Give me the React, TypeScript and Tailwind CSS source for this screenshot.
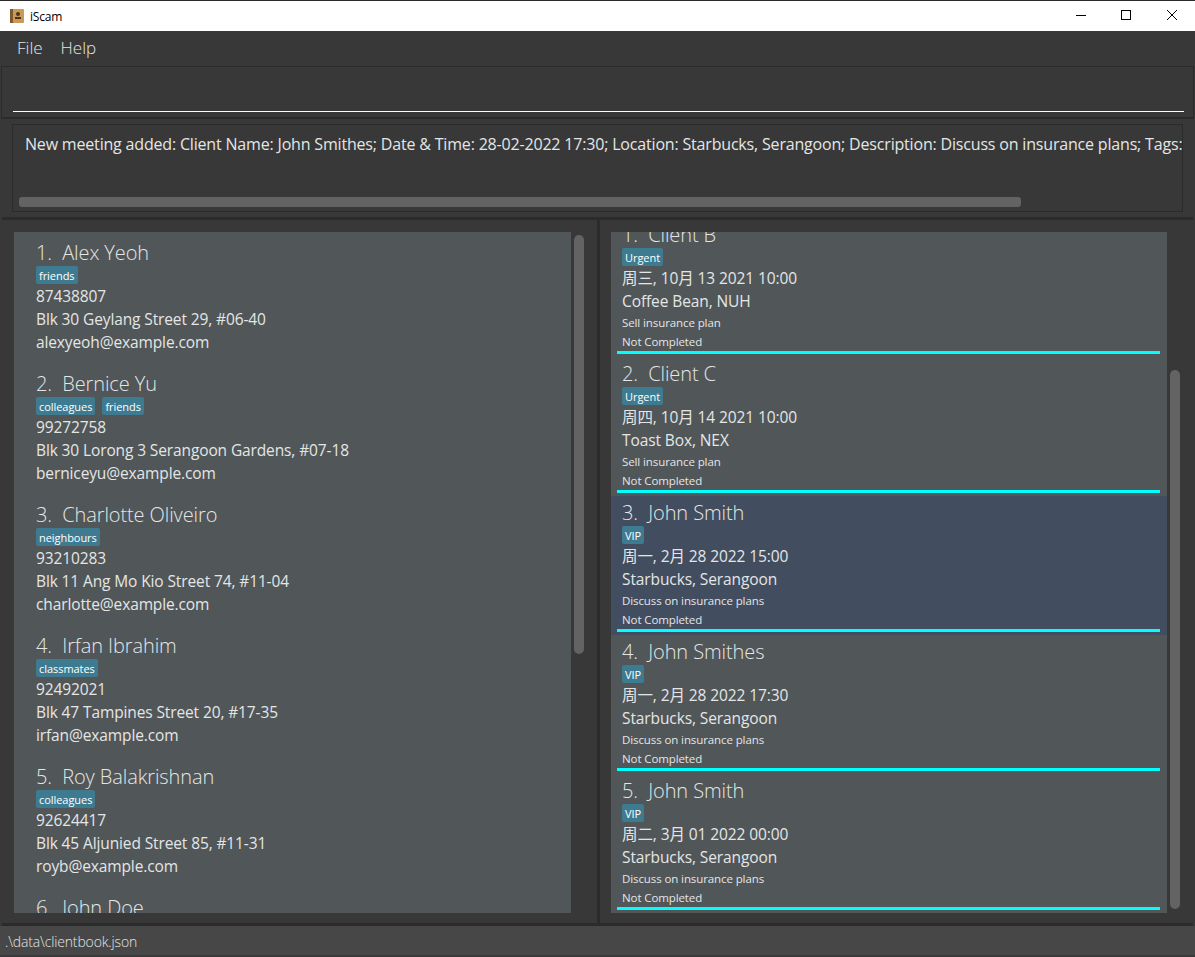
const clients = [
  { name: "Alex Yeoh", tags: ["friends"], phone: "87438807", address: "Blk 30 Geylang Street 29, #06-40", email: "alexyeoh@example.com" },
  { name: "Bernice Yu", tags: ["colleagues", "friends"], phone: "99272758", address: "Blk 30 Lorong 3 Serangoon Gardens, #07-18", email: "berniceyu@example.com" },
  { name: "Charlotte Oliveiro", tags: ["neighbours"], phone: "93210283", address: "Blk 11 Ang Mo Kio Street 74, #11-04", email: "charlotte@example.com" },
  { name: "Irfan Ibrahim", tags: ["classmates"], phone: "92492021", address: "Blk 47 Tampines Street 20, #17-35", email: "irfan@example.com" },
  { name: "Roy Balakrishnan", tags: ["colleagues"], phone: "92624417", address: "Blk 45 Aljunied Street 85, #11-31", email: "royb@example.com" },
  { name: "John Doe", tags: ["friends"], phone: "91234567", address: "Blk 1 Example Road", email: "john@example.com" },
];

const meetings = [
  { name: "Client B", tag: "Urgent", date: "周三, 10月 13 2021 10:00", place: "Coffee Bean, NUH", desc: "Sell insurance plan" },
  { name: "Client C", tag: "Urgent", date: "周四, 10月 14 2021 10:00", place: "Toast Box, NEX", desc: "Sell insurance plan" },
  { name: "John Smith", tag: "VIP", date: "周一, 2月 28 2022 15:00", place: "Starbucks, Serangoon", desc: "Discuss on insurance plans", selected: true },
  { name: "John Smithes", tag: "VIP", date: "周一, 2月 28 2022 17:30", place: "Starbucks, Serangoon", desc: "Discuss on insurance plans" },
  { name: "John Smith", tag: "VIP", date: "周二, 3月 01 2022 00:00", place: "Starbucks, Serangoon", desc: "Discuss on insurance plans" },
];

const Tag = ({ label }: { label: string }) => (
  <span className="h-[18px] px-[3px] flex items-center rounded-[2px] bg-[#3e7b91] text-white text-[11px] tracking-[-0.05px] leading-none">
    {label}
  </span>
);

const ClientCard = ({ index, client }: { index: number; client: (typeof clients)[number] }) => (
  <div className="h-[131px] pl-[22px] pt-[7px] shrink-0 text-[#e4e6e6]">
    <div className="h-[28px] flex items-center text-[20px] font-light tracking-[-0.1px] whitespace-pre">{index}.  {client.name}</div>
    <div className="h-[18px] flex gap-[7px] mt-[-1px]">
      {client.tags.map((tag) => (
        <Tag key={tag} label={tag} />
      ))}
    </div>
    <div className="h-[23px] mt-[1px] flex items-center text-[15.5px] tracking-[-0.12px]">{client.phone}</div>
    <div className="h-[23px] flex items-center text-[15.5px] tracking-[-0.12px]">{client.address}</div>
    <div className="h-[23px] flex items-center text-[15.5px] tracking-[-0.12px]">{client.email}</div>
  </div>
);

const MeetingCard = ({ index, meeting }: { index: number; meeting: (typeof meetings)[number] }) => (
  <div className={`h-[139px] shrink-0 pt-[3px] pl-[6px] pr-[7px] text-[#e4e6e6] ${meeting.selected ? "bg-[#424d5f]" : ""}`}>
    <div className="pl-[5px] h-[28px] flex items-center text-[20px] font-light tracking-[-0.1px] whitespace-pre">{index}.  {meeting.name}</div>
    <div className="pl-[5px] h-[18px] mt-[-1px] flex">
      <Tag label={meeting.tag} />
    </div>
    <div className="pl-[5px] h-[23px] mt-[1px] flex items-center text-[15.5px] tracking-[-0.1px]">{meeting.date}</div>
    <div className="pl-[5px] h-[23px] flex items-center text-[15.5px] tracking-[-0.1px]">{meeting.place}</div>
    <div className="pl-[5px] h-[19px] flex items-center text-[11.5px] tracking-[-0.1px]">{meeting.desc}</div>
    <div className="pl-[5px] h-[19px] flex items-center text-[11.5px] tracking-[-0.1px]">Not Completed</div>
    <div className="h-[3px] bg-[#00ffff]" />
  </div>
);

export default function App() {
  return (
    <div className="w-[1195px] h-[957px] flex flex-col overflow-hidden bg-[#383838] font-['Open_Sans','Noto_Sans_CJK_SC',sans-serif]">
      {/* Title bar */}
      <div className="h-[31px] shrink-0 border-t border-[#2a2a2a] bg-white flex items-center pl-[10px] text-black">
        <svg width="14" height="14" viewBox="0 0 14 14">
          <rect x="0" y="0" width="14" height="14" rx="1" fill="#c99a55" />
          <rect x="0" y="0" width="3" height="14" fill="#7d5a30" />
          <circle cx="8" cy="5" r="2" fill="#4a3320" />
          <rect x="5" y="8" width="6" height="2" fill="#4a3320" />
        </svg>
        <span className="ml-[6px] mt-[1px] text-[12px] tracking-[-0.2px]">iScam</span>
        <div className="ml-auto flex items-center">
          <svg width="46" height="30" viewBox="0 0 46 30">
            <path d="M19 14.5H29" stroke="#000" />
          </svg>
          <svg width="46" height="30" viewBox="0 0 46 30">
            <rect x="18.5" y="9.5" width="9" height="9" fill="none" stroke="#000" />
          </svg>
          <svg width="46" height="30" viewBox="0 0 46 30">
            <path d="M18 9L28 19M28 9L18 19" stroke="#000" />
          </svg>
        </div>
      </div>

      {/* Menu */}
      <div className="h-[35px] shrink-0 flex items-center pl-[17px] pb-[1px] gap-[18px] text-[17px] font-light text-[#e4e6e6]">
        <span>File</span>
        <span>Help</span>
      </div>

      {/* Command box */}
      <div className="h-[53px] shrink-0 mx-[1px] border border-[#2b2b2b] border-b-2 pl-[11px] pr-[9px] flex items-end pb-[5px]">
        <div className="w-full h-px bg-white" />
      </div>

      {/* Result display */}
      <div className="h-[98px] shrink-0 mx-[2px] px-[10px] pt-[5px]">
        <div className="h-[88px] border border-[#2b2b2b] px-[6px] relative overflow-hidden">
          <p className="pl-[6px] pt-[7px] text-[16px] tracking-[-0.18px] text-[#e4e6e6] whitespace-nowrap">
            New meeting added: Client Name: John Smithes; Date &amp; Time: 28-02-2022 17:30; Location: Starbucks, Serangoon; Description: Discuss on insurance plans; Tags: [VIP]
          </p>
          <div className="absolute left-[6px] top-[72px] w-[1002px] h-[10px] rounded-[3px] bg-[#636363]" />
        </div>
      </div>

      {/* Lists */}
      <div className="flex-1 min-h-0 flex mx-[2px] border-y-[3px] border-[#2b2b2b]">
        <div className="w-[598px] shrink-0 pl-[12px] pt-[12px] pb-[10px] flex border-r-[3px] border-[#2b2b2b]">
          <div className="w-[557px] h-full bg-[#515658] overflow-hidden flex flex-col">
            {clients.map((client, i) => (
              <ClientCard key={client.name} index={i + 1} client={client} />
            ))}
          </div>
          <div className="w-[10px] h-[419px] mt-[3px] ml-[3px] rounded-[5px] bg-[#636363]" />
        </div>

        <div className="flex-1 pl-[11px] pt-[12px] flex">
          <div className="w-[556px] h-[681px] bg-[#515658] overflow-hidden flex flex-col">
            <div className="mt-[-14px] flex flex-col">
              {meetings.map((meeting, i) => (
                <MeetingCard key={i} index={i + 1} meeting={meeting} />
              ))}
            </div>
          </div>
          <div className="w-[10px] h-[539px] mt-[138px] ml-[3px] rounded-[5px] bg-[#636363]" />
        </div>
      </div>

      {/* Status bar */}
      <div className="h-[31px] shrink-0 bg-[#474747] border-b-2 border-[#3a3a3a] pl-[5px] pt-[2px] flex items-center text-[14px] font-light tracking-[-0.15px] text-[#e4e6e6]">
        .\data\clientbook.json
      </div>
    </div>
  );
}
